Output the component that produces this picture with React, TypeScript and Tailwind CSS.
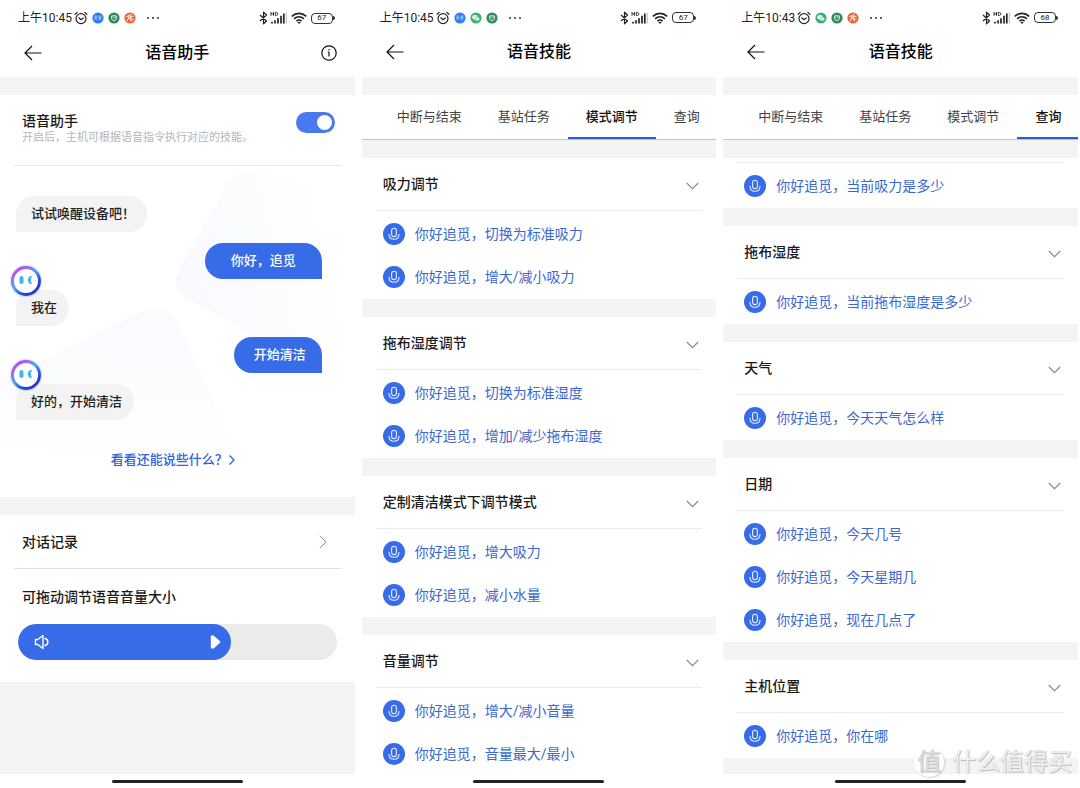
import { useState, type ReactNode } from "react";
import clsx from "clsx";

type AppBadge = "zhihu" | "wechat" | "shield" | "runner";

interface CommandGroup {
  title?: string;
  commands: string[];
}

const TABS = ["中断与结束", "基站任务", "模式调节", "查询"];

const MODE_GROUPS: CommandGroup[] = [
  { title: "吸力调节", commands: ["你好追觅，切换为标准吸力", "你好追觅，增大/减小吸力"] },
  { title: "拖布湿度调节", commands: ["你好追觅，切换为标准湿度", "你好追觅，增加/减少拖布湿度"] },
  { title: "定制清洁模式下调节模式", commands: ["你好追觅，增大吸力", "你好追觅，减小水量"] },
  { title: "音量调节", commands: ["你好追觅，增大/减小音量", "你好追觅，音量最大/最小"] },
];

const QUERY_GROUPS: CommandGroup[] = [
  { commands: ["你好追觅，当前吸力是多少"] },
  { title: "拖布湿度", commands: ["你好追觅，当前拖布湿度是多少"] },
  { title: "天气", commands: ["你好追觅，今天天气怎么样"] },
  { title: "日期", commands: ["你好追觅，今天几号", "你好追觅，今天星期几", "你好追觅，现在几点了"] },
  { title: "主机位置", commands: ["你好追觅，你在哪"] },
];

function AlarmIcon() {
  return (
    <svg viewBox="0 0 14 14" className="size-3.5" fill="none" stroke="#222" strokeWidth="1.2" strokeLinecap="round">
      <circle cx="7" cy="7.6" r="5" />
      <path d="M4.8 6.8 7 8.8l2.4-1.7M1.1 3.3 3.2 1.4M12.9 3.3l-2.1-1.9" />
    </svg>
  );
}

function BadgeIcon({ name }: { name: AppBadge }) {
  if (name === "zhihu") {
    return (
      <svg viewBox="0 0 12 12" className="size-3">
        <circle cx="6" cy="6" r="5.6" fill="#2f7df0" />
        <path
          d="M2.6 4h2.6M2.2 5.8h3.1M3.8 4v1.8L2.4 8M4 6.5 5 8M6.4 4.3l3-.4M6.2 6h3.6M7.9 4.2V8l-.8-.3M6.7 4.9l.3.6M9.2 4.8l-.3.7"
          fill="none"
          stroke="#cfe2ff"
          strokeWidth="0.6"
        />
      </svg>
    );
  }
  if (name === "wechat") {
    return (
      <svg viewBox="0 0 12 12" className="size-3">
        <circle cx="6" cy="6" r="5.6" fill="#3bb273" />
        <ellipse cx="5" cy="5.2" rx="2.7" ry="2.2" fill="#fff" />
        <ellipse cx="7.3" cy="6.9" rx="2.3" ry="1.9" fill="#fff" stroke="#3bb273" strokeWidth="0.4" />
        <path d="M4 4.8h.1M5.9 4.8H6M6.5 6.6h.1M8 6.6h.1" stroke="#3bb273" strokeWidth="0.6" strokeLinecap="round" />
      </svg>
    );
  }
  if (name === "shield") {
    return (
      <svg viewBox="0 0 12 12" className="size-3">
        <circle cx="6" cy="6" r="5.6" fill="#2e8a5b" />
        <path d="M3.7 3.9h4.6v2.6c0 1.2-1 1.9-2.3 2.3-1.3-.4-2.3-1.1-2.3-2.3z" fill="none" stroke="#fff" strokeWidth="0.9" />
        <path d="m5.3 5.5.8.8 1.3-1.3" fill="none" stroke="#fff" strokeWidth="0.7" />
      </svg>
    );
  }
  return (
    <svg viewBox="0 0 12 12" className="size-3">
      <circle cx="6" cy="6" r="5.6" fill="#e8643a" />
      <path
        d="M2.6 4.7 5 3.5l2.2 1.3 2-.6M5.2 3.6 4.6 6 3 9M4.8 6l2 1 .4 2.2M6.9 5.1 6.3 6.6l2.8.9"
        fill="none"
        stroke="#fff"
        strokeWidth="0.9"
        strokeLinecap="round"
      />
      <circle cx="7" cy="2.8" r="0.8" fill="#fff" />
    </svg>
  );
}

function BluetoothIcon() {
  return (
    <svg viewBox="0 0 9 14" className="h-3.5 w-[9px]" fill="none" stroke="#222" strokeWidth="1.2" strokeLinejoin="round">
      <path d="m1 4 6.5 6L4.500 12.800V1.200L7.500 4 1 10" />
    </svg>
  );
}

function SignalIcon() {
  return (
    <svg viewBox="0 0 17 14" className="h-3.5 w-[17px]" fill="none" stroke="#222">
      <path d="M1 1v3.800M3.500 1v3.800M1 2.900h2.500M5.300 1.400v3h1.200c1.700 0 1.700-3 0-3z" strokeWidth="0.9" />
      <path d="M2 10.800v1.700M5 9.300v3.200M8 7.300v5.200M11 4.800v7.700M13.800 2.500v10" strokeWidth="1.7" />
      <path d="M16.3 1.500v11" stroke="#aaa" strokeWidth="0.8" />
    </svg>
  );
}

function WifiIcon() {
  return (
    <svg viewBox="0 0 16 14" className="h-3.5 w-4" fill="none" stroke="#222" strokeWidth="1.6">
      <path d="M.8 5.400c4.200-4 10.200-4 14.400 0M3.100 7.900c2.900-2.700 6.900-2.700 9.800 0M5.400 10.200c1.600-1.500 3.600-1.500 5.200 0" />
      <path d="m8 13-1.600-1.700c.9-.7 2.300-.7 3.200 0z" fill="#222" stroke="none" />
    </svg>
  );
}

function StatusBar({ time, badges, battery }: { time: string; badges: AppBadge[]; battery: number }) {
  return (
    <div className="flex h-9 items-center justify-between pr-5 pl-[18px]">
      <div className="flex items-center">
        <span className="text-xs text-[#222]">{time}</span>
        <span className="ml-0.5">
          <AlarmIcon />
        </span>
        <span className="ml-1 flex gap-1">
          {badges.map((name) => (
            <BadgeIcon key={name} name={name} />
          ))}
        </span>
        <svg viewBox="0 0 14 4" className="ml-2.5 h-1 w-3.5" fill="#333">
          <circle cx="2" cy="2" r="1" />
          <circle cx="7" cy="2" r="1" />
          <circle cx="12" cy="2" r="1" />
        </svg>
      </div>
      <div className="flex items-center">
        <BluetoothIcon />
        <span className="ml-0.5">
          <SignalIcon />
        </span>
        <span className="ml-1">
          <WifiIcon />
        </span>
        <span className="ml-1 flex h-[11px] w-[22px] items-center justify-center rounded border border-[#333] text-[8px] leading-none text-[#222]">
          {battery}
        </span>
        <span className="h-1 w-0.5 rounded-r bg-[#333]" />
      </div>
    </div>
  );
}

function ScreenHeader({ title, info }: { title: string; info?: boolean }) {
  return (
    <header className="flex h-[41px] shrink-0 items-center justify-between px-[18px] pb-2">
      <button type="button" aria-label="返回" className="flex w-8 items-center pl-1.5">
        <svg viewBox="0 0 18 16" className="h-4 w-[18px]" fill="none" stroke="#111" strokeWidth="1.2">
          <path d="M17.500 8H1M8 1 1 8l7 7" />
        </svg>
      </button>
      <h1 className="text-base font-medium text-black">{title}</h1>
      <div className="flex w-8 justify-end">
        {info && (
          <button type="button" aria-label="信息">
            <svg viewBox="0 0 16 16" className="size-4" fill="none" stroke="#111" strokeWidth="1.2">
              <circle cx="8" cy="8" r="7.2" />
              <path d="M8 7v4.500M6.800 7H8" />
              <circle cx="8" cy="4.7" r="0.8" fill="#111" stroke="none" />
            </svg>
          </button>
        )}
      </div>
    </header>
  );
}

function Band() {
  return <div className="h-[18px] shrink-0 bg-[#f4f4f4]" />;
}

function HomeBar() {
  return (
    <div className="flex h-3.5 shrink-0 items-center justify-center bg-white">
      <span className="h-[3px] w-[131px] rounded-full bg-[#222]" />
    </div>
  );
}

function Screen({ children }: { children: ReactNode }) {
  return <section className="flex h-full min-w-0 flex-col overflow-hidden bg-white">{children}</section>;
}

function Avatar() {
  return (
    <svg viewBox="0 0 34 34" className="absolute -top-[26px] -left-[7px] size-[34px]">
      <defs>
        <linearGradient id="ring" x1="0.15" y1="0.1" x2="0.8" y2="0.9">
          <stop offset="0" stopColor="#b44df0" />
          <stop offset="0.2" stopColor="#9a6cf0" />
          <stop offset="0.45" stopColor="#3fa9ee" />
          <stop offset="0.8" stopColor="#2146dd" />
          <stop offset="1" stopColor="#2b35d0" />
        </linearGradient>
        <radialGradient id="glow">
          <stop offset="0.8" stopColor="#8fa2f8" stopOpacity="0.7" />
          <stop offset="1" stopColor="#8fa2f8" stopOpacity="0" />
        </radialGradient>
      </defs>
      <circle cx="17" cy="17" r="17" fill="url(#glow)" />
      <circle cx="17" cy="17" r="13.5" fill="#fff" stroke="url(#ring)" strokeWidth="2.8" />
      <rect x="10.5" y="12" width="4" height="8" rx="2" fill="#43b3ea" />
      <path d="M22.400 12.400c-4.200-.4-4.200 7.600 0 7.200-1.400-2.400-1.400-4.800 0-7.200z" fill="#43b3ea" stroke="#43b3ea" strokeWidth="1" strokeLinejoin="round" />
    </svg>
  );
}

function Bubble({ text, mine, avatar }: { text: string; mine?: boolean; avatar?: boolean }) {
  return (
    <div
      className={clsx(
        "relative flex h-9 items-center rounded-full text-[13px] font-medium",
        mine ? "self-end rounded-br-none bg-[#386be8] text-white" : "self-start rounded-bl-none bg-[#f3f3f4] pr-3 pl-[15px] text-[#222]",
        mine && (text.length > 4 ? "px-[26px]" : "pr-4 pl-5"),
      )}
    >
      {text}
      {avatar && <Avatar />}
    </div>
  );
}

function ChatBackdrop() {
  return (
    <svg viewBox="0 0 355 331" preserveAspectRatio="none" className="absolute inset-0 size-full">
      <defs>
        <linearGradient id="facetA" x1="0" y1="0.6" x2="0.9" y2="0.4">
          <stop offset="0" stopColor="#f8f9fe" />
          <stop offset="1" stopColor="#ffffff" />
        </linearGradient>
        <linearGradient id="facetB" x1="0.6" y1="0" x2="0.5" y2="1">
          <stop offset="0" stopColor="#f9fafe" />
          <stop offset="1" stopColor="#ffffff" />
        </linearGradient>
      </defs>
      <path d="M228 18Q236 4 250 6L320 16 355 180 250 168 184 130Q172 120 178 106Z" fill="url(#facetA)" />
      <path d="M0 215 140 146Q166 136 180 160L240 295 0 310Z" fill="url(#facetB)" />
    </svg>
  );
}

function VolumeSlider() {
  const [volume, setVolume] = useState(67);

  return (
    <div className="relative mx-[18px] h-9 overflow-hidden rounded-full bg-[#ebebeb]">
      <div
        className="flex h-full items-center justify-between rounded-full bg-[#386be8] pr-2.5 pl-4"
        style={{ width: `${volume}%` }}
      >
        <svg viewBox="0 0 16 16" className="size-4" fill="none" stroke="#fff" strokeWidth="1.4" strokeLinejoin="round">
          <path d="M1.500 5.500h2.300L9 1.500v13l-5.200-4H1.500z" />
          <path d="M11 4.500c3.800.8 3.800 6.200 0 7" strokeLinecap="round" />
        </svg>
        <svg viewBox="0 0 11 14" className="h-3.5 w-[11px]" fill="#fff">
          <path d="M1.500.5h2.200L10 6.200q.8.8 0 1.600L3.700 13.500H1.500Q.8 13.500.8 12.800V1.200Q.8.5 1.500.5z" />
        </svg>
      </div>
      <input
        id="volume"
        type="range"
        min={14}
        max={100}
        value={volume}
        onChange={(e) => setVolume(Number(e.target.value))}
        className="absolute inset-0 size-full cursor-pointer opacity-0"
      />
    </div>
  );
}

function AssistantScreen() {
  const [enabled, setEnabled] = useState(true);

  return (
    <Screen>
      <StatusBar time="上午10:45" badges={["zhihu", "shield", "runner"]} battery={67} />
      <ScreenHeader title="语音助手" info />
      <Band />

      <div className="mx-3.5 flex h-[71px] items-center justify-between border-b border-[#e6e6e6] pr-1.5 pl-2">
        <div className="pb-0.5">
          <label htmlFor="assistant" className="block text-sm leading-[18px] font-medium text-[#1a1a1a]">
            语音助手
          </label>
          <p className="text-[11px] leading-4 text-[#b5b5b5]">开启后，主机可根据语音指令执行对应的技能。</p>
        </div>
        <span className="relative mb-4 flex h-[21px] w-[39px] shrink-0">
          <input
            id="assistant"
            type="checkbox"
            role="switch"
            checked={enabled}
            onChange={(e) => setEnabled(e.target.checked)}
            className="peer size-full cursor-pointer appearance-none rounded-full bg-gray-300 checked:bg-[#4a78ee]"
          />
          <span className="pointer-events-none absolute top-[3px] left-1 size-[15px] rounded-full bg-white peer-checked:left-[21px]" />
        </span>
      </div>

      <div className="relative h-[331px] shrink-0">
        <ChatBackdrop />
        <div className="relative flex flex-col gap-[11px] pt-[30px] pr-[33px] pl-4">
          <Bubble text="试试唤醒设备吧！" />
          <Bubble text="你好，追觅" mine />
          <Bubble text="我在" avatar />
          <Bubble text="开始清洁" mine />
          <Bubble text="好的，开始清洁" avatar />
        </div>
        <a href="#skills" className="relative mt-[30px] flex items-center justify-center pr-2 text-[13px] leading-5 font-medium text-[#2f62dc]">
          看看还能说些什么？
          <svg viewBox="0 0 8 12" className="h-3 w-2" fill="none" stroke="#2f62dc" strokeWidth="1.4">
            <path d="m1.500 1.500 4.500 4.500-4.500 4.500" />
          </svg>
        </a>
      </div>
      <Band />

      <button
        type="button"
        className="mx-3.5 flex h-[54px] items-center justify-between border-b border-[#e0e0e0] pr-3.5 pl-2 text-sm font-medium text-[#1a1a1a]"
      >
        对话记录
        <svg viewBox="0 0 8 14" className="h-3.5 w-2" fill="none" stroke="#888">
          <path d="m1 .8 6 6.200-6 6.200" />
        </svg>
      </button>
      <label htmlFor="volume" className="flex h-[55px] items-center px-[22px] text-sm font-medium text-[#1a1a1a]">
        可拖动调节语音音量大小
      </label>
      <VolumeSlider />
      <div className="mt-[22px] grow bg-[#f4f4f4]" />
      <HomeBar />
    </Screen>
  );
}

function MicIcon() {
  return (
    <span className="flex size-[22px] shrink-0 items-center justify-center rounded-full bg-[#386be8]">
      <svg viewBox="0 0 14 14" className="size-3.5" fill="none" stroke="#e6edff" strokeWidth="1.1" strokeLinecap="round">
        <rect x="4.6" y="1.2" width="4.8" height="8.4" rx="2.4" />
        <path d="M2 7.200c.2 6.800 9.800 6.800 10 0" />
      </svg>
    </span>
  );
}

function GroupCard({ group }: { group: CommandGroup }) {
  return (
    <div className="shrink-0 bg-white">
      {group.title ? (
        <button
          type="button"
          className="mx-3.5 flex h-[53px] w-[calc(100%-28px)] items-center justify-between border-b border-[#ececec] pt-px pr-[3px] pl-[7px] text-sm font-medium text-[#1a1a1a]"
        >
          {group.title}
          <svg viewBox="0 0 13 8" className="mt-1 h-2 w-[13px]" fill="none" stroke="#888" strokeWidth="1.1">
            <path d="m.8 1 5.700 5.700L12.200 1" />
          </svg>
        </button>
      ) : (
        <div className="mx-3.5 h-[5px] border-b border-[#ececec]" />
      )}
      <ul className="pt-0.5">
        {group.commands.map((command) => (
          <li key={command} className="flex h-[43px] items-center gap-2.5 pl-[21px] text-sm text-[#3a68cf]">
            <MicIcon />
            {command}
          </li>
        ))}
      </ul>
    </div>
  );
}

interface SkillsScreenProps {
  time: string;
  badges: AppBadge[];
  battery: number;
  initialTab: string;
  groups: CommandGroup[];
  trailingBand?: boolean;
}

function SkillsScreen({ time, badges, battery, initialTab, groups, trailingBand }: SkillsScreenProps) {
  const [active, setActive] = useState(initialTab);

  return (
    <Screen>
      <StatusBar time={time} badges={badges} battery={battery} />
      <ScreenHeader title="语音技能" />
      <Band />
      <nav className="flex h-[45px] shrink-0 overflow-hidden border-b border-[#c4c4c4] pl-[17px]">
        {TABS.map((tab) => (
          <button
            key={tab}
            type="button"
            onClick={() => setActive(tab)}
            className={clsx(
              "shrink-0 border-b-2 px-[18px] pt-0.5 text-[13px]",
              tab === active ? "border-[#2a5cdc] font-medium text-[#111]" : "border-transparent text-[#444]",
            )}
          >
            {tab}
          </button>
        ))}
      </nav>
      <Band />
      <div className="flex min-h-0 grow flex-col gap-[18px] overflow-hidden bg-[#f4f4f4]">
        {groups.map((group) => (
          <GroupCard key={group.commands[0]} group={group} />
        ))}
        {trailingBand && <div className="h-px shrink-0" />}
      </div>
      <HomeBar />
    </Screen>
  );
}

function Watermark() {
  return (
    <div className="pointer-events-none absolute right-2 bottom-2.5 flex items-center gap-2 text-2xl leading-8 text-[#f0f0f0] [text-shadow:1px_1px_1px_#bbb,0_0_1px_#c8c8c8]">
      <span className="flex size-[30px] items-center justify-center rounded-full bg-white/90 text-[#dcdcdc] shadow-[1px_1px_2px_#ccc]">值</span>
      什么值得买
    </div>
  );
}

export default function App() {
  return (
    <main
      lang="zh-CN"
      className="relative grid h-screen grid-cols-3 gap-[7px] overflow-hidden bg-white pr-0.5 font-[Roboto,'Noto_Sans_CJK_SC',sans-serif]"
    >
      <AssistantScreen />
      <SkillsScreen
        time="上午10:45"
        badges={["zhihu", "wechat", "shield"]}
        battery={67}
        initialTab="模式调节"
        groups={MODE_GROUPS}
      />
      <SkillsScreen
        time="上午10:43"
        badges={["wechat", "shield", "runner"]}
        battery={68}
        initialTab="查询"
        groups={QUERY_GROUPS}
        trailingBand
      />
      <Watermark />
    </main>
  );
}
